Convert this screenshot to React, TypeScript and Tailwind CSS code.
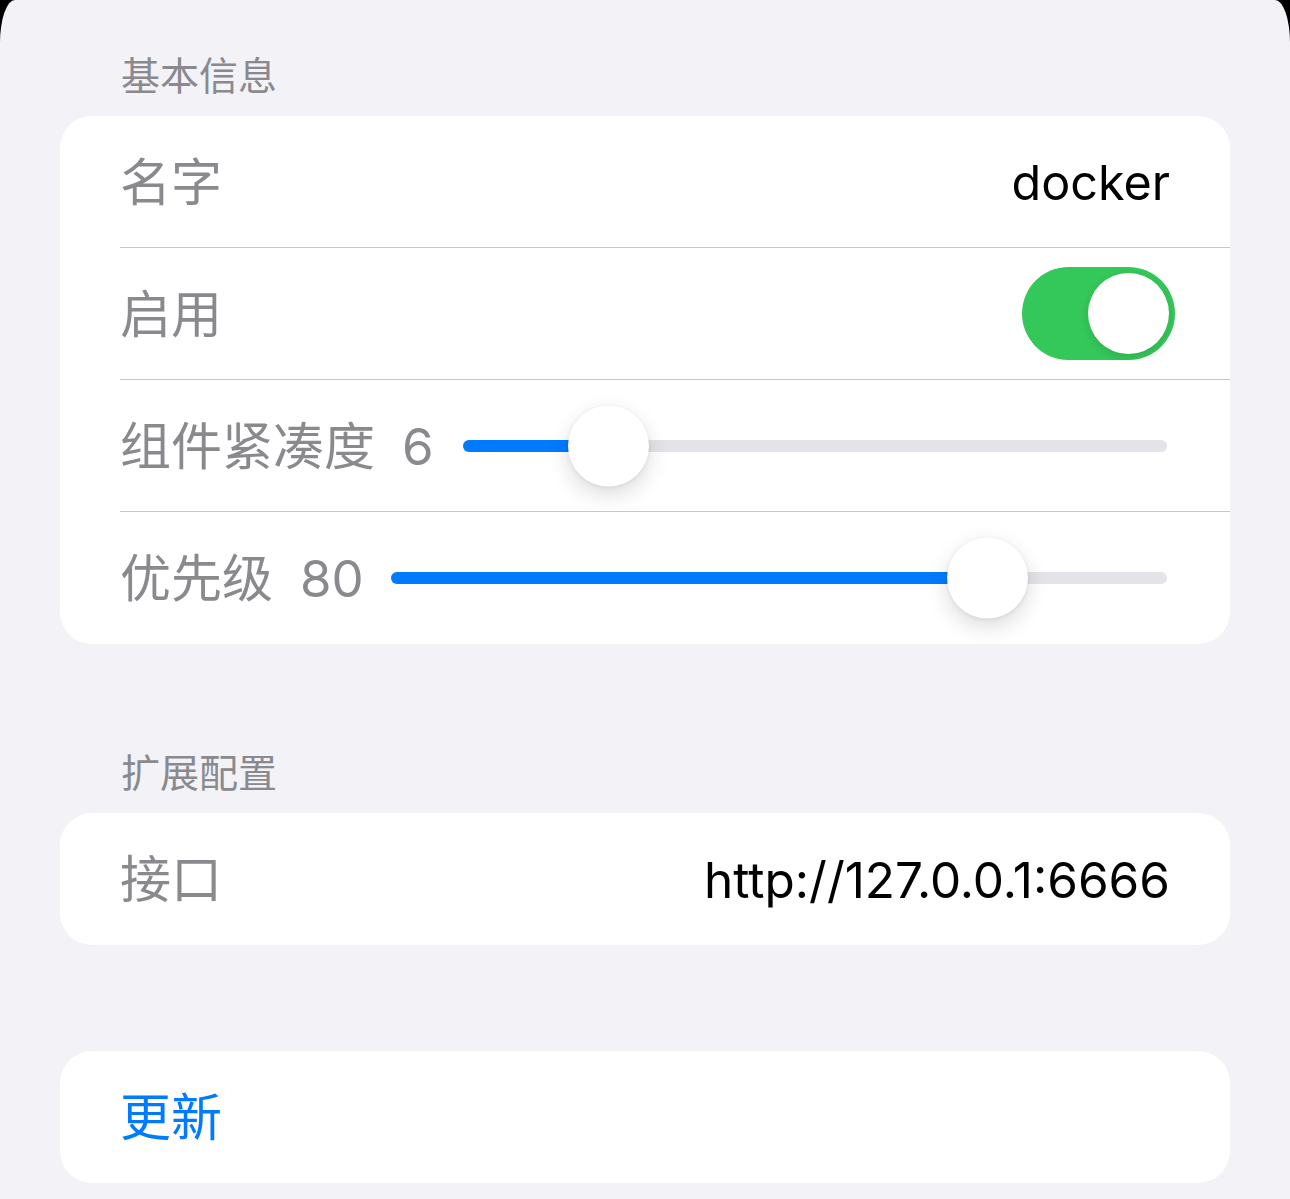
const font = { fontFamily: 'Inter, "Noto Sans CJK SC", sans-serif' };

type SliderProps = { value: number; min: number; max: number };

const Slider = ({ value, min, max }: SliderProps) => {
  const frac = (value - min) / (max - min);
  return (
    <div className="relative flex-1 h-[12px] rounded-full bg-[#e3e3e8]">
      <div
        className="absolute left-0 top-0 h-full rounded-full bg-[#007aff]"
        style={{ width: `calc(${frac} * (100% - 81px) + 40px)` }}
      />
      <div
        className="absolute top-1/2 -translate-y-1/2 w-[81px] h-[81px] rounded-full bg-white shadow-[0_8px_22px_rgba(0,0,0,0.14),0_1px_4px_rgba(0,0,0,0.08)]"
        style={{ left: `calc(${frac} * (100% - 81px))` }}
      />
    </div>
  );
};

const Row = ({
  children,
  last = false,
}: {
  children: React.ReactNode;
  last?: boolean;
}) => (
  <div className="pl-[60px]">
    <div
      className={`flex items-center h-[132px] pr-[60px] ${
        last ? "" : "border-b border-[#c6c6c8]"
      }`}
    >
      {children}
    </div>
  </div>
);

const Header = ({ title, className }: { title: string; className: string }) => (
  <div className={`px-[121px] text-[39px] leading-[47px] text-[#8a8a8e] ${className}`}>
    {title}
  </div>
);

export default function App() {
  return (
    <div className="bg-black w-[1290px] h-[1199px]" style={font}>
      <div className="h-full bg-[#f2f2f7] rounded-tl-[15px_43px] rounded-tr-[15px_43px] overflow-hidden">
        <Header title="基本信息" className="pt-[52px] pb-[17px]" />
        <div className="mx-[60px] bg-white rounded-[32px] overflow-hidden">
          <Row>
            <span className="pt-[3px] text-[51px] text-[#8a8a8e]">名字</span>
            <span className="pt-[3px] ml-auto text-[48.5px] text-black">docker</span>
          </Row>
          <Row>
            <span className="pt-[3px] text-[51px] text-[#8a8a8e]">启用</span>
            <div className="ml-auto mr-[-5px] w-[153px] h-[93px] rounded-full bg-[#34c759] flex items-center justify-end pr-[6px]">
              <div className="w-[81px] h-[81px] rounded-full bg-white shadow-[0_3px_8px_rgba(0,0,0,0.12)]" />
            </div>
          </Row>
          <Row>
            <span className="pt-[3px] text-[51px] text-[#8a8a8e]">
              组件紧凑度<span className="ml-[27px]">6</span>
            </span>
            <div className="flex-1 flex ml-[29px] mr-[3px]">
              <Slider value={6} min={1} max={30.7} />
            </div>
          </Row>
          <Row last>
            <span className="pt-[3px] text-[51px] text-[#8a8a8e]">
              优先级<span className="ml-[27px]">80</span>
            </span>
            <div className="flex-1 flex ml-[27px] mr-[3px]">
              <Slider value={80} min={0} max={100} />
            </div>
          </Row>
        </div>

        <Header title="扩展配置" className="pt-[105px] pb-[17px]" />
        <div className="mx-[60px] bg-white rounded-[32px] overflow-hidden">
          <Row last>
            <span className="pt-[3px] text-[51px] text-[#8a8a8e]">接口</span>
            <span className="pt-[3px] ml-auto text-[49.5px] text-black">http://127.0.0.1:6666</span>
          </Row>
        </div>

        <div className="mt-[106px] mx-[60px] bg-white rounded-[32px] overflow-hidden">
          <Row last>
            <span className="pt-[3px] text-[51px] text-[#007aff]">更新</span>
          </Row>
        </div>
      </div>
    </div>
  );
}
